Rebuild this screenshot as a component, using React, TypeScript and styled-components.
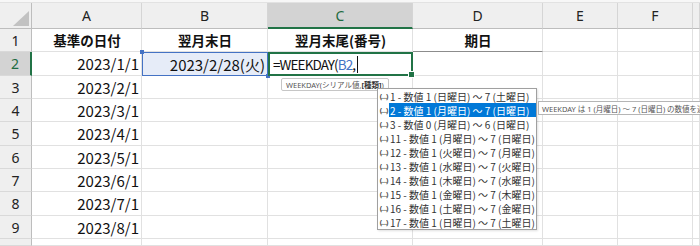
import React from 'react';
import styled, { createGlobalStyle, css } from 'styled-components';

const GlobalStyle = createGlobalStyle`
  html, body {
    margin: 0;
    padding: 0;
    background: #ffffff;
    overflow: hidden;
  }
  body {
    font-family: 'Noto Sans', 'Noto Sans CJK JP', sans-serif;
  }
`;

const columns = ['A', 'B', 'C', 'D', 'E', 'F', ''];
const dates = ['2023/1/1', '2023/2/1', '2023/3/1', '2023/4/1', '2023/5/1', '2023/6/1', '2023/7/1', '2023/8/1'];
const headings = ['基準の日付', '翌月末日', '翌月末尾(番号)', '期日'];

const options = [
  '1 - 数値 1 (日曜日) ～ 7 (土曜日)',
  '2 - 数値 1 (月曜日) ～ 7 (日曜日)',
  '3 - 数値 0 (月曜日) ～ 6 (日曜日)',
  '11 - 数値 1 (月曜日) ～ 7 (日曜日)',
  '12 - 数値 1 (火曜日) ～ 7 (月曜日)',
  '13 - 数値 1 (水曜日) ～ 7 (火曜日)',
  '14 - 数値 1 (木曜日) ～ 7 (水曜日)',
  '15 - 数値 1 (金曜日) ～ 7 (木曜日)',
  '16 - 数値 1 (土曜日) ～ 7 (金曜日)',
  '17 - 数値 1 (日曜日) ～ 7 (土曜日)',
];

const App: React.FC = () => {
  return (
    <Page>
      <GlobalStyle />
      <TopStrip />
      <Sheet>
        <Corner>
          <Triangle />
        </Corner>
        {columns.map((c) => (
          <ColHeader key={c || 'g'} $active={c === 'C'}>
            {c}
          </ColHeader>
        ))}

        {/* row 1 */}
        <RowHeader>1</RowHeader>
        {headings.map((h, i) => (
          <Cell key={h} $align="center" $bold $underline={i === 3}>
            {h}
          </Cell>
        ))}
        <Cell />
        <Cell />
        <Cell />

        {/* row 2 */}
        <RowHeader $active>2</RowHeader>
        <Cell $align="right">{dates[0]}</Cell>
        <RefCell $align="right">2023/2/28(火)</RefCell>
        <EditCell>
          =WEEKDAY(<RefText>B2</RefText>,<Caret />
        </EditCell>
        <Cell />
        <Cell />
        <Cell />
        <Cell />

        {dates.slice(1).map((d, i) => (
          <React.Fragment key={d}>
            <RowHeader>{i + 3}</RowHeader>
            <Cell $align="right">{d}</Cell>
            <Cell />
            <Cell />
            <Cell />
            <Cell />
            <Cell />
            <Cell />
          </React.Fragment>
        ))}

        <RowHeader />
        <Cell />
        <Cell />
        <Cell />
        <Cell />
        <Cell />
        <Cell />
        <Cell />
      </Sheet>

      <ArgHint>
        WEEKDAY(シリアル値, <b>[種類]</b>)
      </ArgHint>

      <ListBox>
        {options.map((o, i) => (
          <ListItem key={o}>
            <ArgIcon>(…)</ArgIcon>
            <ItemLabel $selected={i === 1}>{o}</ItemLabel>
          </ListItem>
        ))}
      </ListBox>

      <Tip>WEEKDAY は 1 (月曜日) ～ 7 (日曜日) の数値を返します。</Tip>
    </Page>
  );
};

export default App;

const Page = styled.div`
  position: relative;
  width: 700px;
  height: 246px;
  overflow: hidden;
  background: #ffffff;
`;

const TopStrip = styled.div`
  height: 3px;
  background: #f7f7f7;
  border-bottom: 1px solid #e2e2e2;
  box-sizing: border-box;
`;

const Sheet = styled.div`
  display: grid;
  grid-template-columns: 32px 110px 126px 145px 130px 75px 75px 1fr;
  grid-template-rows: 26px 23px 24px 23px 23px 24px 23px 23px 24px 23px 1fr;
  height: 243px;

  & > * {
    box-sizing: border-box;
    min-width: 0;
  }
`;

const headerBase = css`
  display: flex;
  align-items: center;
  justify-content: center;
  background: #efefef;
  color: #222;
  font-family: 'Noto Sans', 'Noto Sans CJK JP', sans-serif;
  font-size: 14px;
`;

const Corner = styled.div`
  ${headerBase};
  align-items: flex-end;
  justify-content: flex-end;
  padding: 0 2px 2px 0;
  border-right: 1px solid #bdbdbd;
  border-bottom: 1px solid #bdbdbd;
`;

const Triangle = styled.div`
  width: 16px;
  height: 15px;
  background: #c2c2c2;
  clip-path: polygon(100% 0, 100% 100%, 0 100%);
`;

const ColHeader = styled.div<{ $active?: boolean }>`
  ${headerBase};
  border-right: 1px solid #d5d5d5;
  border-bottom: 1px solid #bdbdbd;
  ${(p) =>
    p.$active &&
    css`
      background: #d3d3d3;
      color: #1e6b41;
      border-bottom: 2px solid #217346;
    `}
`;

const RowHeader = styled.div<{ $active?: boolean }>`
  ${headerBase};
  border-right: 1px solid #bdbdbd;
  border-bottom: 1px solid #d9d9d9;
  ${(p) =>
    p.$active &&
    css`
      background: #d3d3d3;
      color: #1e6b41;
      border-right: 2px solid #217346;
    `}
`;

const Cell = styled.div<{ $align?: 'left' | 'center' | 'right'; $bold?: boolean; $underline?: boolean }>`
  display: flex;
  align-items: center;
  justify-content: ${(p) => (p.$align === 'right' ? 'flex-end' : p.$align === 'center' ? 'center' : 'flex-start')};
  padding: 0 2px 0 3px;
  border-right: 1px solid #e1e1e1;
  border-bottom: 1px solid ${(p) => (p.$underline ? '#8c8c8c' : '#e1e1e1')};
  font-family: 'Noto Sans CJK JP', sans-serif;
  font-size: ${(p) => (p.$bold ? '13.5px' : '15px')};
  font-weight: ${(p) => (p.$bold ? 700 : 400)};
  color: #111;
  white-space: nowrap;
  overflow: visible;
`;

const RefCell = styled(Cell)`
  position: relative;
  background: #e6ecf8;
  border: 1px solid #4472c4;
  padding-right: 2px;

  &::before,
  &::after {
    content: '';
    position: absolute;
    width: 4px;
    height: 4px;
    background: #4472c4;
  }
  &::before {
    left: -3px;
    top: -3px;
  }
  &::after {
    right: -3px;
    bottom: -3px;
  }
`;

const EditCell = styled.div`
  position: relative;
  display: flex;
  align-items: center;
  padding-left: 3px;
  border: 2px solid #217346;
  font-family: 'Noto Sans CJK JP', sans-serif;
  font-size: 13.5px;
  letter-spacing: -0.9px;
  color: #111;
  white-space: nowrap;

  &::after {
    content: '';
    position: absolute;
    right: -4px;
    bottom: -4px;
    width: 5px;
    height: 5px;
    background: #217346;
    border: 1px solid #fff;
  }
`;

const RefText = styled.span`
  color: #4472c4;
`;

const Caret = styled.span`
  display: inline-block;
  width: 1px;
  height: 17px;
  margin-left: 2px;
  background: #111;
`;

const ArgHint = styled.div`
  position: absolute;
  left: 281px;
  top: 78px;
  height: 11px;
  padding: 0 4px;
  display: flex;
  align-items: center;
  background: #ffffff;
  border: 1px solid #c6c6c6;
  border-radius: 2px;
  font-family: 'Noto Sans', 'Noto Sans CJK JP', sans-serif;
  font-size: 7.5px;
  color: #555;
  white-space: nowrap;

  b {
    font-weight: 700;
    color: #333;
  }
`;

const ListBox = styled.div`
  position: absolute;
  left: 377px;
  top: 88px;
  width: 160px;
  box-sizing: border-box;
  border: 1px solid #a0a0a0;
  background: #ffffff;
  box-shadow: 1px 1px 2px rgba(0, 0, 0, 0.12);
`;

const ListItem = styled.div`
  display: flex;
  align-items: stretch;
  height: 14px;
`;

const ArgIcon = styled.span`
  display: flex;
  align-items: center;
  justify-content: center;
  width: 11px;
  font-family: 'Noto Sans', sans-serif;
  font-size: 7px;
  font-weight: 700;
  color: #444;
  letter-spacing: -1px;
`;

const ItemLabel = styled.span<{ $selected?: boolean }>`
  flex: 1;
  display: flex;
  align-items: center;
  padding-left: 1px;
  font-family: 'Noto Sans CJK JP', sans-serif;
  font-size: 10px;
  white-space: nowrap;
  color: ${(p) => (p.$selected ? '#ffffff' : '#333333')};
  background: ${(p) => (p.$selected ? '#0078d7' : 'transparent')};
`;

const Tip = styled.div`
  position: absolute;
  left: 538px;
  top: 101px;
  height: 12px;
  padding: 0 3px;
  display: flex;
  align-items: center;
  background: #ffffff;
  border: 1px solid #b5b5b5;
  font-family: 'Noto Sans', 'Noto Sans CJK JP', sans-serif;
  font-size: 7.5px;
  color: #555;
  white-space: nowrap;
`;
